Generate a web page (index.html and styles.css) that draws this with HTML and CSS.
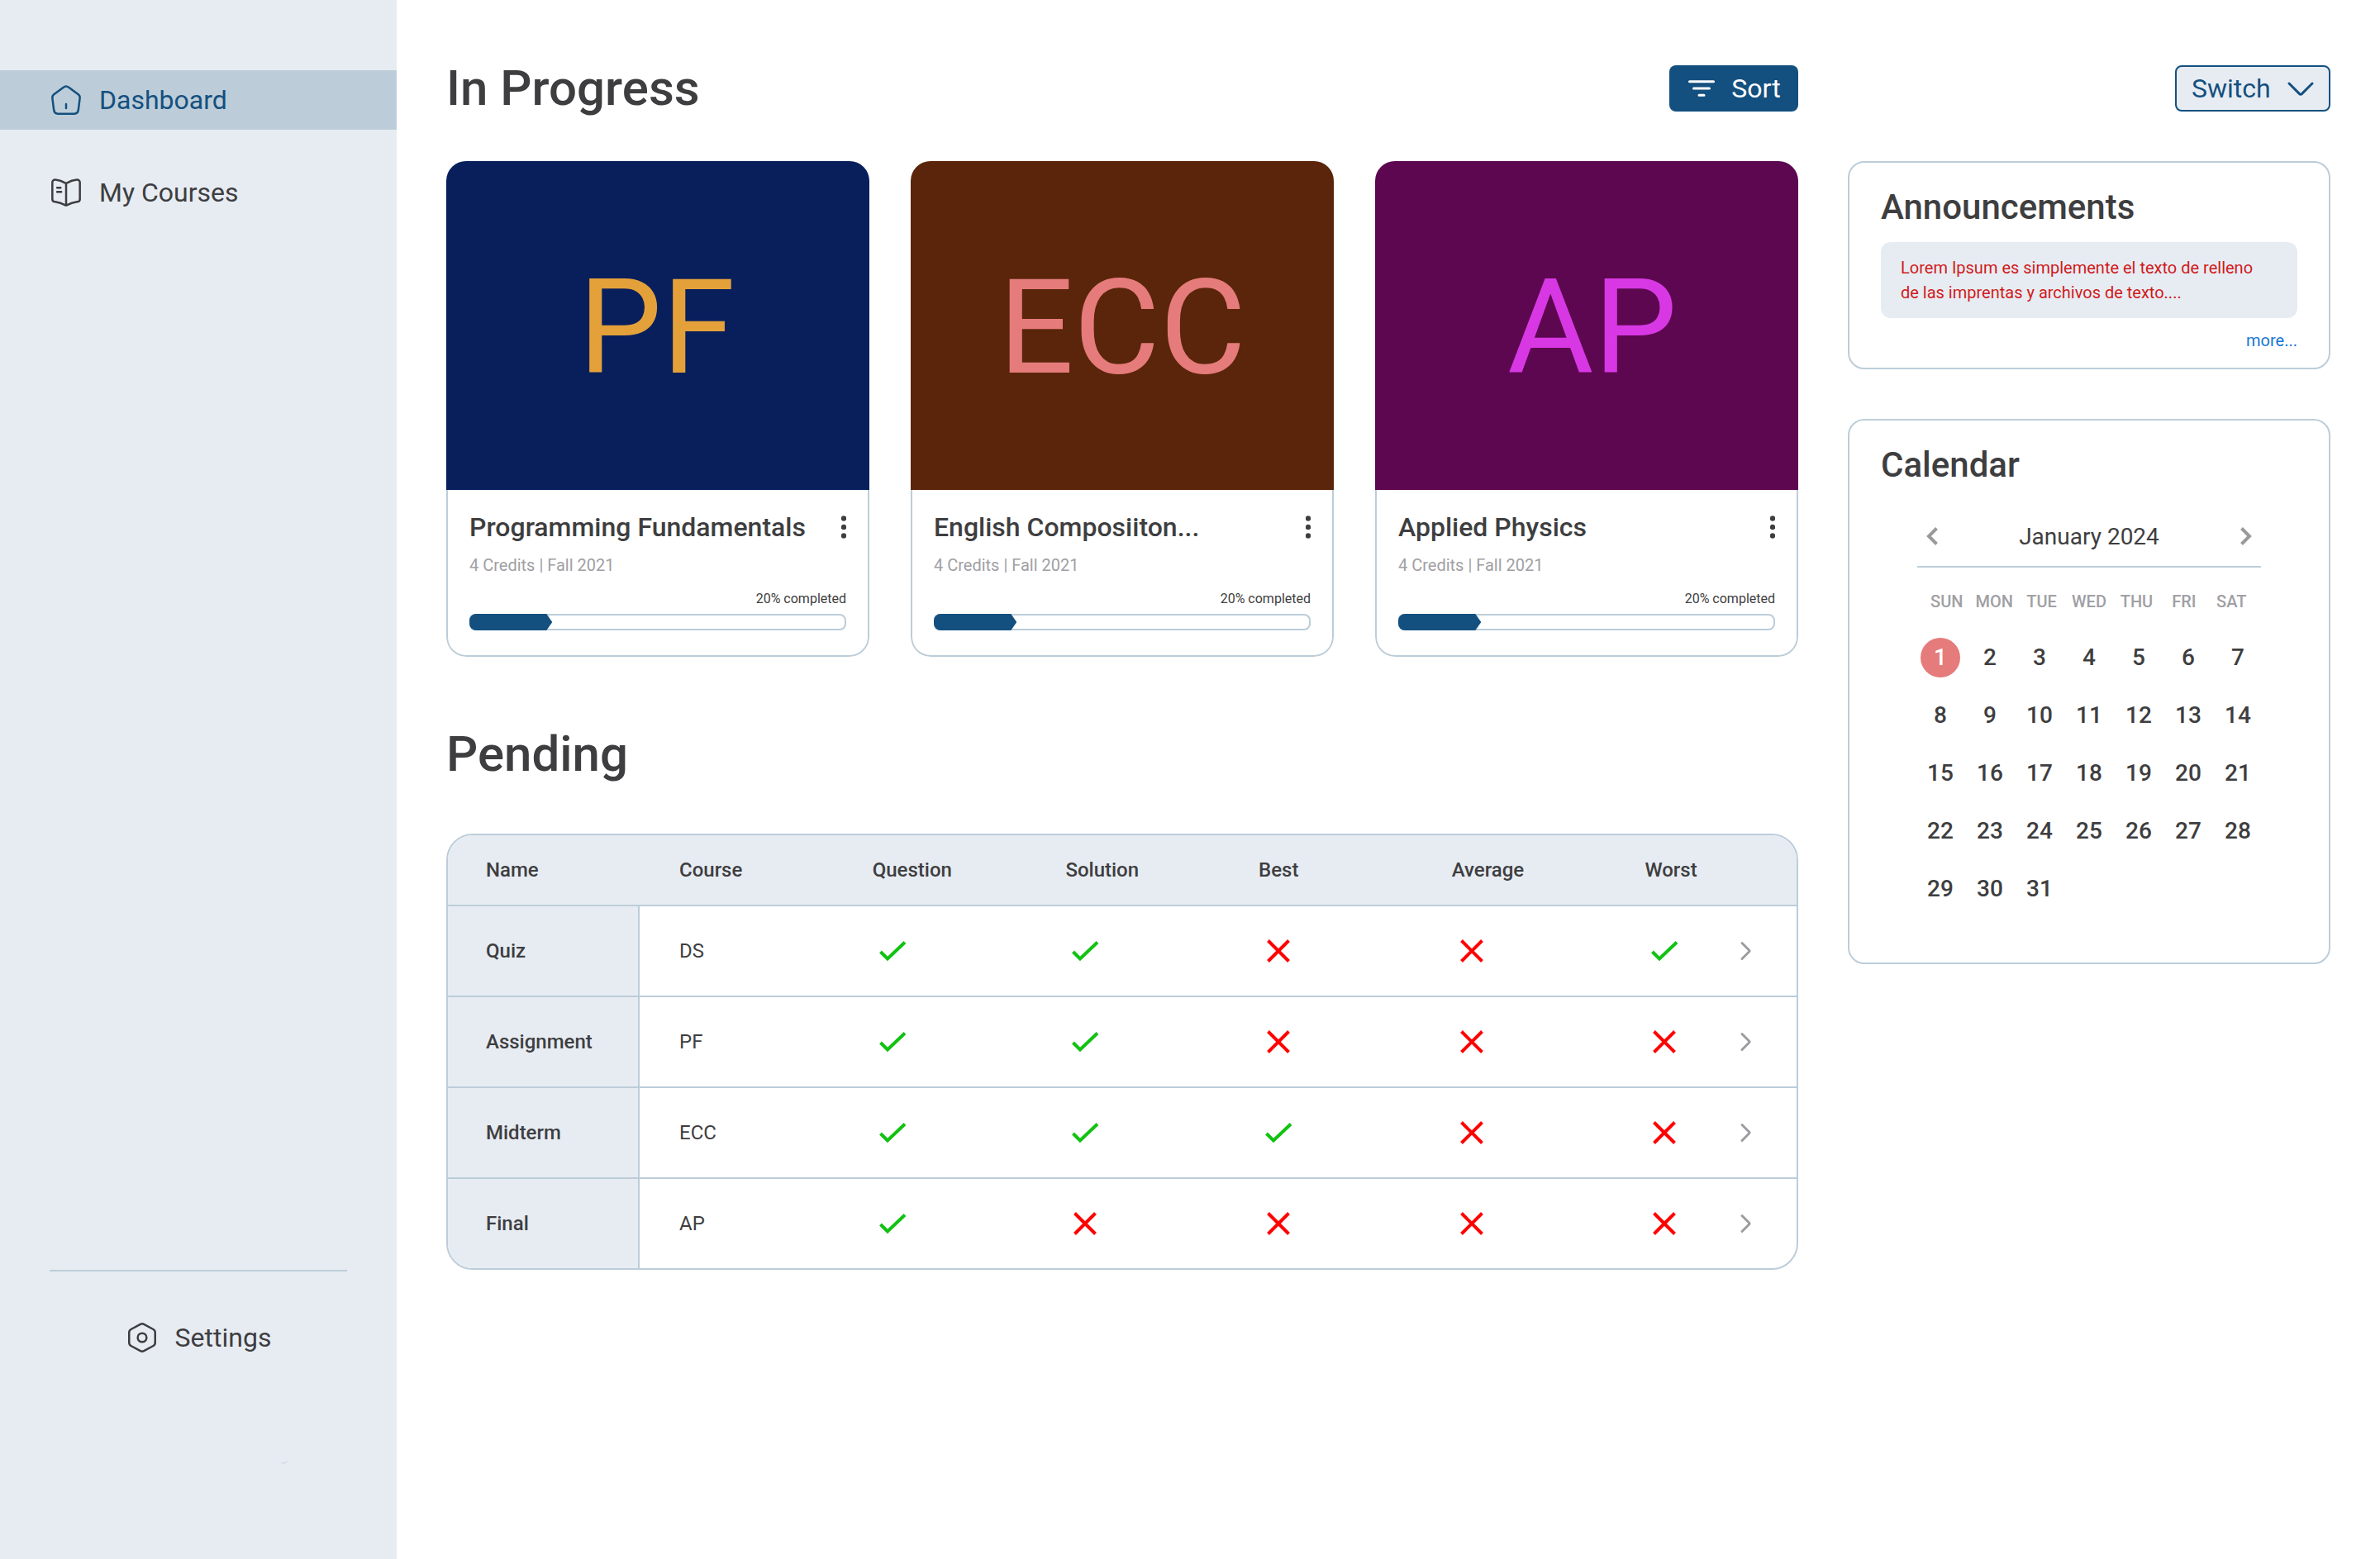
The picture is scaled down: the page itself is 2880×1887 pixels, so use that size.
FILE: index.html
```html
<!DOCTYPE html>
<html lang="en">
<head>
<meta charset="utf-8">
<title>Dashboard</title>
<link rel="stylesheet" href="styles.css">
</head>
<body>
<svg class="sprite" aria-hidden="true">
  <symbol id="check" viewBox="0 0 48 48"><path d="M9.500 25 18 33.500 39 13.500" fill="none" stroke="#12c212" stroke-width="4"/></symbol>
  <symbol id="cross" viewBox="0 0 48 48"><path d="M11.500 11.500 36.500 36.500M36.500 11.500 11.500 36.500" fill="none" stroke="#ff0000" stroke-width="4"/></symbol>
  <symbol id="next" viewBox="0 0 48 48"><path d="M20 14.500 28.500 23Q29.500 24 28.500 25L20 33.500" fill="none" stroke="#9c9da1" stroke-width="3" stroke-linecap="round"/></symbol>
  <symbol id="dots" viewBox="0 0 6 28"><circle cx="3" cy="3.500" r="3.200"/><circle cx="3" cy="14" r="3.200"/><circle cx="3" cy="24.500" r="3.200"/></symbol>
</svg>
<div class="app">
  <aside class="sidebar">
    <nav class="nav">
      <a class="nav-link active" href="#">
        <svg class="icon" viewBox="0 0 24 24"><path d="M10.070 2.820 3.140 8C2.360 8.600 1.900 9.700 2.030 10.700L3.100 19.240C3.360 20.900 4.500 22 6 22H18C19.500 22 20.640 20.900 20.900 19.240L21.970 10.700C22.100 9.700 21.640 8.600 20.860 8L13.930 2.820C12.860 2 11.130 2 10.070 2.820ZM12 18V15"/></svg>
        Dashboard
      </a>
      <a class="nav-link" href="#">
        <svg class="icon" viewBox="0 0 24 24"><path d="M22 16.740V4.670C22 3.470 21.020 2.580 19.830 2.680H19.770C17.670 2.860 14.480 3.930 12.700 5.050L12.530 5.160C12.240 5.340 11.760 5.340 11.470 5.160L11.220 5.010C9.440 3.900 6.260 2.840 4.160 2.670C2.970 2.570 2 3.470 2 4.660V16.740C2 17.700 2.780 18.600 3.740 18.720L4.030 18.760C6.200 19.050 9.550 20.150 11.470 21.200L11.510 21.220C11.780 21.370 12.210 21.370 12.470 21.220C14.390 20.160 17.750 19.050 19.930 18.760L20.260 18.720C21.220 18.600 22 17.700 22 16.740ZM12 5.490V20.490M8 8.490H5.500M8.500 11.490H5.500"/></svg>
        My Courses
      </a>
    </nav>
    <div class="sidebar-foot">
      <a class="nav-link settings" href="#">
        <svg class="icon" viewBox="0 0 24 24"><path d="M2.550 8.400V15.600C2.550 16.800 3 17.500 3.900 18L10.700 21.650C11.500 22.100 12.500 22.100 13.300 21.650L20.100 18C21 17.500 21.450 16.800 21.450 15.600V8.400C21.450 7.200 21 6.500 20.100 6L13.300 2.350C12.500 1.900 11.500 1.900 10.700 2.350L3.900 6C3 6.500 2.550 7.200 2.550 8.400Z"/><circle cx="12" cy="12" r="3.200"/></svg>
        Settings
      </a>
      <svg class="mark" viewBox="0 0 10 5"><path d="M0 4Q5 6 9.500 0Q6 3.500 0 4Z" fill="#c6d4df"/></svg>
    </div>
  </aside>

  <main class="main">
    <header class="bar">
      <h1 class="heading">In Progress</h1>
      <button class="sort" type="button">
        <svg class="icon-sort" viewBox="0 0 32 20"><path d="M1.500 1.700H30.500M6.500 10H25.500M13 18.300H19"/></svg>
        Sort
      </button>
    </header>
    <section class="cards">
      <article class="card">
        <div class="cover cover-pf"><span class="pair">PF</span></div>
        <div class="card-body">
          <div class="card-top"><h2 class="card-title">Programming Fundamentals</h2><button class="menu" type="button" aria-label="Course menu"><svg class="dots"><use href="#dots"/></svg></button></div>
          <p class="credits">4 Credits | Fall 2021</p>
          <p class="done">20% completed</p>
          <div class="track" role="progressbar" aria-label="Progress" aria-valuenow="20"><div class="fill"></div></div>
        </div>
      </article>
      <article class="card">
        <div class="cover cover-ecc">ECC</div>
        <div class="card-body">
          <div class="card-top"><h2 class="card-title">English Composiiton...</h2><button class="menu" type="button" aria-label="Course menu"><svg class="dots"><use href="#dots"/></svg></button></div>
          <p class="credits">4 Credits | Fall 2021</p>
          <p class="done">20% completed</p>
          <div class="track" role="progressbar" aria-label="Progress" aria-valuenow="20"><div class="fill"></div></div>
        </div>
      </article>
      <article class="card">
        <div class="cover cover-ap"><span class="pair">AP</span></div>
        <div class="card-body">
          <div class="card-top"><h2 class="card-title">Applied Physics</h2><button class="menu" type="button" aria-label="Course menu"><svg class="dots"><use href="#dots"/></svg></button></div>
          <p class="credits">4 Credits | Fall 2021</p>
          <p class="done">20% completed</p>
          <div class="track" role="progressbar" aria-label="Progress" aria-valuenow="20"><div class="fill"></div></div>
        </div>
      </article>
    </section>

    <h1 class="heading pending">Pending</h1>
    <div class="table-box">
      <table class="tasks">
        <colgroup><col class="c-name"><col class="c-data"><col class="c-data"><col class="c-data"><col class="c-data"><col class="c-data"><col><col class="c-go"></colgroup>
        <thead>
          <tr><th>Name</th><th>Course</th><th>Question</th><th>Solution</th><th>Best</th><th>Average</th><th colspan="2">Worst</th></tr>
        </thead>
        <tbody>
          <tr><th scope="row">Quiz</th><td>DS</td><td><svg class="state"><use href="#check"/></svg></td><td><svg class="state"><use href="#check"/></svg></td><td><svg class="state"><use href="#cross"/></svg></td><td><svg class="state"><use href="#cross"/></svg></td><td><svg class="state"><use href="#check"/></svg></td><td class="go"><button class="open" type="button" aria-label="Open"><svg class="state"><use href="#next"/></svg></button></td></tr>
          <tr><th scope="row">Assignment</th><td>PF</td><td><svg class="state"><use href="#check"/></svg></td><td><svg class="state"><use href="#check"/></svg></td><td><svg class="state"><use href="#cross"/></svg></td><td><svg class="state"><use href="#cross"/></svg></td><td><svg class="state"><use href="#cross"/></svg></td><td class="go"><button class="open" type="button" aria-label="Open"><svg class="state"><use href="#next"/></svg></button></td></tr>
          <tr><th scope="row">Midterm</th><td>ECC</td><td><svg class="state"><use href="#check"/></svg></td><td><svg class="state"><use href="#check"/></svg></td><td><svg class="state"><use href="#check"/></svg></td><td><svg class="state"><use href="#cross"/></svg></td><td><svg class="state"><use href="#cross"/></svg></td><td class="go"><button class="open" type="button" aria-label="Open"><svg class="state"><use href="#next"/></svg></button></td></tr>
          <tr><th scope="row">Final</th><td>AP</td><td><svg class="state"><use href="#check"/></svg></td><td><svg class="state"><use href="#cross"/></svg></td><td><svg class="state"><use href="#cross"/></svg></td><td><svg class="state"><use href="#cross"/></svg></td><td><svg class="state"><use href="#cross"/></svg></td><td class="go"><button class="open" type="button" aria-label="Open"><svg class="state"><use href="#next"/></svg></button></td></tr>
        </tbody>
      </table>
    </div>
  </main>

  <aside class="side">
    <div class="switch">
      <select class="switch-select" aria-label="Switch"><option>Switch</option></select>
      <svg class="switch-arrow" viewBox="0 0 32 18"><path d="M2 2 14.600 14.600Q16 16 17.400 14.600L30 2"/></svg>
    </div>
    <section class="panel announcements">
      <h2 class="panel-title">Announcements</h2>
      <p class="notice">Lorem Ipsum es simplemente el texto de relleno<br>de las imprentas y archivos de texto....</p>
      <a class="more" href="#">more...</a>
    </section>
    <section class="panel calendar">
      <h2 class="panel-title">Calendar</h2>
      <div class="month-box">
        <div class="month">
          <button class="step" type="button" aria-label="Previous month"><svg class="step-icon" viewBox="0 0 14 22"><path d="M12.500 1.500 3 11 12.500 20.500"/></svg></button>
          <span>January 2024</span>
          <button class="step" type="button" aria-label="Next month"><svg class="step-icon" viewBox="0 0 14 22"><path d="M1.500 1.500 11 11 1.500 20.500"/></svg></button>
        </div>
        <table class="days">
          <thead><tr><th>SUN</th><th>MON</th><th>TUE</th><th>WED</th><th>THU</th><th>FRI</th><th>SAT</th></tr></thead>
          <tbody>
            <tr><td class="today">1</td><td>2</td><td>3</td><td>4</td><td>5</td><td>6</td><td>7</td></tr>
            <tr><td>8</td><td>9</td><td>10</td><td>11</td><td>12</td><td>13</td><td>14</td></tr>
            <tr><td>15</td><td>16</td><td>17</td><td>18</td><td>19</td><td>20</td><td>21</td></tr>
            <tr><td>22</td><td>23</td><td>24</td><td>25</td><td>26</td><td>27</td><td>28</td></tr>
            <tr><td>29</td><td>30</td><td>31</td><td></td><td></td><td></td><td></td></tr>
          </tbody>
        </table>
      </div>
    </section>
  </aside>
</div>
</body>
</html>
```
FILE: styles.css
```css
:root {
  --text: #3e3e40;
  --muted: #a0a0a4;
  --line: #bccdd9;
  --pale: #e7ecf3;
  --primary: #14507f;
}

* { box-sizing: border-box; }

body {
  margin: 0;
  background: #fff;
  color: var(--text);
  font-family: Roboto, "Liberation Sans", sans-serif;
  font-size: 24px;
}

h1, h2, p { margin: 0; font-weight: 500; }

button, select {
  margin: 0;
  padding: 0;
  border: 0;
  background: none;
  color: inherit;
  font: inherit;
}

a { text-decoration: none; color: inherit; }
svg { display: block; flex: none; }
.sprite { position: absolute; width: 0; height: 0; }

.app {
  display: grid;
  grid-template-columns: 480px minmax(0, 1fr) 584px;
  column-gap: 60px;
  min-height: 100vh;
  padding-right: 60px;
}

/* Sidebar */
.sidebar {
  display: flex;
  flex-direction: column;
  justify-content: space-between;
  background: var(--pale);
  padding-top: 85px;
}

.nav { display: flex; flex-direction: column; gap: 40px; }

.nav-link {
  display: flex;
  align-items: center;
  gap: 20px;
  height: 72px;
  padding: 0 60px;
  font-size: 32px;
}

.nav-link.active { background: var(--line); color: var(--primary); }

.icon {
  width: 40px;
  height: 40px;
  fill: none;
  stroke: currentColor;
  stroke-width: 1.5;
  stroke-linecap: round;
  stroke-linejoin: round;
}

.sidebar-foot {
  margin: 0 60px;
  padding: 44px 0 115px;
  border-top: 2px solid var(--line);
}

.settings { justify-content: center; padding: 0; }
.mark { width: 10px; height: 5px; margin: 112px 0 0 280px; }

/* Main column */
.main, .side { padding: 79px 0 60px; }

.bar { display: flex; justify-content: space-between; align-items: center; margin-bottom: 60px; }
.heading { font-size: 60px; line-height: 56px; }
.pending { margin: 90px 0 68px; }

.sort {
  display: flex;
  align-items: center;
  justify-content: center;
  gap: 20px;
  min-width: 156px;
  height: 56px;
  padding: 0 20px 0 22px;
  border-radius: 8px;
  background: var(--primary);
  color: #fff;
  font-size: 32px;
}

.icon-sort { width: 32px; height: 20px; stroke: currentColor; stroke-width: 3; stroke-linecap: round; }

.cards { display: grid; grid-template-columns: repeat(3, minmax(0, 1fr)); gap: 50px; }

.card { border-radius: 24px; overflow: hidden; }

.cover {
  display: flex;
  align-items: center;
  justify-content: center;
  height: 398px;
  padding-top: 4px;
  font-size: 160px;
}

/* Two-letter codes share one starting edge */
.pair { flex: none; width: 192px; }

.cover-pf { background: #081f5c; color: #e4a13a; }
.cover-ecc { background: #5a250a; color: #e57b7b; }
.cover-ap { background: #5c0750; color: #d838e4; }

.card-body {
  padding: 25px 26px 30px;
  border: 2px solid var(--line);
  border-top: 0;
  border-radius: 0 0 24px 24px;
}

.card-top { display: flex; justify-content: space-between; align-items: center; height: 40px; }
.card-title { font-size: 32px; line-height: 40px; }
.menu { display: flex; align-items: center; height: 40px; }
.dots { width: 6px; height: 28px; fill: var(--text); }
.credits { margin-top: 14px; font-size: 20px; line-height: 24px; font-weight: 400; color: var(--muted); }
.done { margin: 19px 0 8px; font-size: 16px; line-height: 20px; font-weight: 400; text-align: right; }
.track { height: 20px; border-radius: 8px; box-shadow: inset 0 0 0 2px var(--line); }

.fill {
  width: 22%;
  height: 100%;
  border-radius: 8px 0 0 8px;
  background: var(--primary);
  clip-path: polygon(0 0, calc(100% - 7px) 0, 100% 50%, calc(100% - 7px) 100%, 0 100%);
}

/* Pending table */
.table-box { border: 2px solid var(--line); border-radius: 32px; overflow: hidden; }
.tasks { width: 100%; table-layout: fixed; border-collapse: separate; border-spacing: 0; text-align: left; }
.c-name { width: 232px; }
.c-data { width: 14.32%; }
.c-go { width: 86px; }
.tasks th, .tasks td { height: 110px; padding: 0 0 0 48px; border-bottom: 2px solid var(--line); }
.tasks th { font-weight: 500; background: var(--pale); }
.tasks thead th { height: 86px; }
.tasks th:first-child { padding-left: 46px; }
.tasks tbody th { border-right: 2px solid var(--line); }
.tasks tbody tr:last-child > * { height: 108px; border-bottom: 0; }
.tasks td.go { padding: 0; }
.open { display: block; }
.state { width: 48px; height: 48px; }

/* Right column */
.switch { position: relative; width: 188px; margin: 0 0 60px auto; }

.switch-select {
  display: block;
  width: 100%;
  height: 56px;
  padding: 0 18px;
  border: 2px solid var(--primary);
  border-radius: 8px;
  background: var(--pale);
  color: var(--primary);
  font-size: 32px;
  appearance: none;
}

.switch-arrow {
  position: absolute;
  top: 20px;
  right: 20px;
  width: 32px;
  height: 18px;
  fill: none;
  stroke: var(--primary);
  stroke-width: 3;
  stroke-linecap: round;
  pointer-events: none;
}

.panel { padding: 30px 38px 20px; border: 2px solid var(--line); border-radius: 20px; }
.panel-title { font-size: 42px; line-height: 48px; }
.notice { margin: 18px 0 15px; padding: 16px 24px; border-radius: 12px; background: var(--pale); color: #d01a1a; font-size: 20px; line-height: 30px; font-weight: 400; }
.more { display: block; margin-bottom: 1px; color: #1976d2; font-size: 20px; line-height: 24px; text-align: right; }

.calendar { margin-top: 60px; padding-bottom: 65px; }
.month-box { margin: 38px 44px 0; }
.month { display: flex; justify-content: space-between; align-items: center; height: 62px; padding-bottom: 12px; border-bottom: 2px solid var(--line); font-size: 28px; }
.step { display: flex; align-items: center; justify-content: center; width: 36px; height: 48px; }
.step-icon { width: 14px; height: 22px; fill: none; stroke: #9a9a9d; stroke-width: 4; }

.days { display: block; }
.days th, .days td { padding: 0; font-weight: 500; text-align: center; }
.days thead { display: block; padding: 29px 7px 32px; color: var(--muted); font-size: 20px; line-height: 24px; }
.days thead tr { display: grid; grid-template-columns: repeat(7, 1fr); }
.days tbody { display: grid; gap: 22px; padding: 0 4px; font-size: 28px; line-height: 48px; }
.days tbody tr { display: grid; grid-template-columns: repeat(7, 48px); justify-content: space-between; }
.days .today { border-radius: 50%; background: #e57b7b; color: #fff; }
```
